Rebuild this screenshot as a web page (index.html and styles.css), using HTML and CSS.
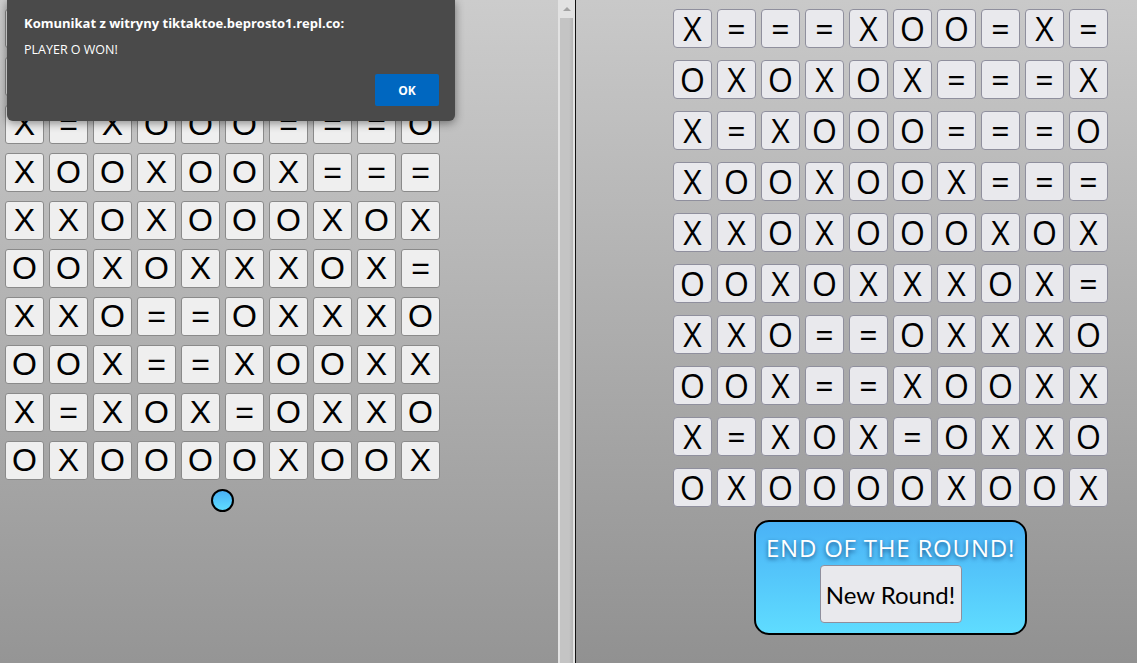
FILE: index.html
```html
<!DOCTYPE html>
<html lang="pl">
<head>
<meta charset="utf-8">
<title>Tik Tak Toe</title>
<link rel="stylesheet" href="styles.css">
</head>
<body>
<div class="pane pane-left">
  <div class="col">
    <div class="board board-l">
      <div class="row"><button class="cell">X</button><button class="cell">=</button><button class="cell">=</button><button class="cell">=</button><button class="cell">X</button><button class="cell">O</button><button class="cell">O</button><button class="cell">=</button><button class="cell">X</button><button class="cell">=</button></div>
      <div class="row"><button class="cell">O</button><button class="cell">X</button><button class="cell">O</button><button class="cell">X</button><button class="cell">O</button><button class="cell">X</button><button class="cell">=</button><button class="cell">=</button><button class="cell">=</button><button class="cell">X</button></div>
      <div class="row"><button class="cell">X</button><button class="cell">=</button><button class="cell">X</button><button class="cell">O</button><button class="cell">O</button><button class="cell">O</button><button class="cell">=</button><button class="cell">=</button><button class="cell">=</button><button class="cell">O</button></div>
      <div class="row"><button class="cell">X</button><button class="cell">O</button><button class="cell">O</button><button class="cell">X</button><button class="cell">O</button><button class="cell">O</button><button class="cell">X</button><button class="cell">=</button><button class="cell">=</button><button class="cell">=</button></div>
      <div class="row"><button class="cell">X</button><button class="cell">X</button><button class="cell">O</button><button class="cell">X</button><button class="cell">O</button><button class="cell">O</button><button class="cell">O</button><button class="cell">X</button><button class="cell">O</button><button class="cell">X</button></div>
      <div class="row"><button class="cell">O</button><button class="cell">O</button><button class="cell">X</button><button class="cell">O</button><button class="cell">X</button><button class="cell">X</button><button class="cell">X</button><button class="cell">O</button><button class="cell">X</button><button class="cell">=</button></div>
      <div class="row"><button class="cell">X</button><button class="cell">X</button><button class="cell">O</button><button class="cell">=</button><button class="cell">=</button><button class="cell">O</button><button class="cell">X</button><button class="cell">X</button><button class="cell">X</button><button class="cell">O</button></div>
      <div class="row"><button class="cell">O</button><button class="cell">O</button><button class="cell">X</button><button class="cell">=</button><button class="cell">=</button><button class="cell">X</button><button class="cell">O</button><button class="cell">O</button><button class="cell">X</button><button class="cell">X</button></div>
      <div class="row"><button class="cell">X</button><button class="cell">=</button><button class="cell">X</button><button class="cell">O</button><button class="cell">X</button><button class="cell">=</button><button class="cell">O</button><button class="cell">X</button><button class="cell">X</button><button class="cell">O</button></div>
      <div class="row"><button class="cell">O</button><button class="cell">X</button><button class="cell">O</button><button class="cell">O</button><button class="cell">O</button><button class="cell">O</button><button class="cell">X</button><button class="cell">O</button><button class="cell">O</button><button class="cell">X</button></div>
    </div>
    <div class="dot"></div>
  </div>
  <div class="dialog">
    <div class="dialog-title">Komunikat z witryny tiktaktoe.beprosto1.repl.co:</div>
    <div class="dialog-msg">PLAYER O WON!</div>
    <button class="dialog-ok">OK</button>
  </div>
</div>
<div class="scrollbar">
  <div class="scroll-arrow"></div>
  <div class="scroll-thumb"></div>
</div>
<div class="pane pane-right">
  <div class="col">
    <div class="board board-r">
      <div class="row"><button class="cell">X</button><button class="cell">=</button><button class="cell">=</button><button class="cell">=</button><button class="cell">X</button><button class="cell">O</button><button class="cell">O</button><button class="cell">=</button><button class="cell">X</button><button class="cell">=</button></div>
      <div class="row"><button class="cell">O</button><button class="cell">X</button><button class="cell">O</button><button class="cell">X</button><button class="cell">O</button><button class="cell">X</button><button class="cell">=</button><button class="cell">=</button><button class="cell">=</button><button class="cell">X</button></div>
      <div class="row"><button class="cell">X</button><button class="cell">=</button><button class="cell">X</button><button class="cell">O</button><button class="cell">O</button><button class="cell">O</button><button class="cell">=</button><button class="cell">=</button><button class="cell">=</button><button class="cell">O</button></div>
      <div class="row"><button class="cell">X</button><button class="cell">O</button><button class="cell">O</button><button class="cell">X</button><button class="cell">O</button><button class="cell">O</button><button class="cell">X</button><button class="cell">=</button><button class="cell">=</button><button class="cell">=</button></div>
      <div class="row"><button class="cell">X</button><button class="cell">X</button><button class="cell">O</button><button class="cell">X</button><button class="cell">O</button><button class="cell">O</button><button class="cell">O</button><button class="cell">X</button><button class="cell">O</button><button class="cell">X</button></div>
      <div class="row"><button class="cell">O</button><button class="cell">O</button><button class="cell">X</button><button class="cell">O</button><button class="cell">X</button><button class="cell">X</button><button class="cell">X</button><button class="cell">O</button><button class="cell">X</button><button class="cell">=</button></div>
      <div class="row"><button class="cell">X</button><button class="cell">X</button><button class="cell">O</button><button class="cell">=</button><button class="cell">=</button><button class="cell">O</button><button class="cell">X</button><button class="cell">X</button><button class="cell">X</button><button class="cell">O</button></div>
      <div class="row"><button class="cell">O</button><button class="cell">O</button><button class="cell">X</button><button class="cell">=</button><button class="cell">=</button><button class="cell">X</button><button class="cell">O</button><button class="cell">O</button><button class="cell">X</button><button class="cell">X</button></div>
      <div class="row"><button class="cell">X</button><button class="cell">=</button><button class="cell">X</button><button class="cell">O</button><button class="cell">X</button><button class="cell">=</button><button class="cell">O</button><button class="cell">X</button><button class="cell">X</button><button class="cell">O</button></div>
      <div class="row"><button class="cell">O</button><button class="cell">X</button><button class="cell">O</button><button class="cell">O</button><button class="cell">O</button><button class="cell">O</button><button class="cell">X</button><button class="cell">O</button><button class="cell">O</button><button class="cell">X</button></div>
    </div>
    <div class="round-box">
      <div class="round-title">END OF THE ROUND!</div>
      <button class="new-round">New Round!</button>
    </div>
  </div>
</div>
</body>
</html>
```
FILE: styles.css
```css
html, body {
  margin: 0;
  padding: 0;
}
body {
  width: 1137px;
  height: 663px;
  display: flex;
  overflow: hidden;
  font-family: "Open Sans", "Liberation Sans", sans-serif;
}
.pane {
  height: 663px;
  box-sizing: border-box;
  background: linear-gradient(#cccccc, #959595);
}
.pane-left {
  width: 558px;
  position: relative;
  padding: 9px 0 0 5px;
}
.pane-right {
  flex: 1;
  padding: 9px 0 0 97px;
  background: linear-gradient(#c9c9c9, #919191);
}
.col {
  width: 435px;
  display: flex;
  flex-direction: column;
  align-items: center;
}
.board {
  display: flex;
  flex-direction: column;
}
.board-l { gap: 9px; }
.board-r { gap: 12px; }
.row {
  display: flex;
  gap: 5px;
}
.cell {
  width: 39px;
  height: 39px;
  box-sizing: border-box;
  padding: 0;
  margin: 0;
  display: flex;
  align-items: center;
  justify-content: center;
  color: #000;
  line-height: 1;
}
.board-l .cell {
  background: #efefef;
  border: 1px solid #8a8a8a;
  border-radius: 3px;
  font: 32px "Liberation Sans", Arial, sans-serif;
}
.board-r .cell {
  background: #e9e9ed;
  border: 1px solid #8f8f9d;
  border-radius: 4px;
  font: 32px "Open Sans", sans-serif;
}
.dot {
  width: 23px;
  height: 23px;
  box-sizing: border-box;
  margin-top: 9px;
  border: 2px solid #000;
  border-radius: 50%;
  background: linear-gradient(#4ab2f6, #5fdcff);
}
.dialog {
  position: absolute;
  left: 7px;
  top: 0;
  width: 448px;
  height: 121px;
  box-sizing: border-box;
  padding: 13px 16px 0 17px;
  background: #4a4a4a;
  border-radius: 0 0 6px 6px;
  box-shadow: 0 2px 10px rgba(0, 0, 0, 0.45);
  display: flex;
  flex-direction: column;
  color: #fff;
}
.dialog-title {
  font: bold 13px/20px "Open Sans", sans-serif;
}
.dialog-msg {
  margin-top: 8px;
  font: 12.5px/18px "Open Sans", sans-serif;
}
.dialog-ok {
  align-self: flex-end;
  margin-top: 15px;
  width: 64px;
  height: 32px;
  border: none;
  border-radius: 2px;
  background: #0067c0;
  color: #fff;
  font: bold 12px "Open Sans", sans-serif;
  padding: 0;
}
.scrollbar {
  width: 17px;
  height: 663px;
  background: #e2e2e2;
  border-right: 1px solid #111;
  display: flex;
  flex-direction: column;
  align-items: center;
}
.scroll-arrow {
  width: 0;
  height: 0;
  margin-top: 7px;
  border-left: 4px solid transparent;
  border-right: 4px solid transparent;
  border-bottom: 4px solid #a3a3a3;
}
.scroll-thumb {
  margin-top: 7px;
  width: 13px;
  flex: 1;
  background: linear-gradient(90deg, #c4c4c4 70%, #b4b4b4);
}
.round-box {
  margin-top: 13px;
  width: 273px;
  height: 115px;
  box-sizing: border-box;
  border: 2px solid #000;
  border-radius: 15px;
  background: linear-gradient(#4ab2f6, #5fdcff);
  display: flex;
  flex-direction: column;
  align-items: center;
  padding-top: 12px;
}
.round-title {
  font: 24px/28px "Open Sans", sans-serif;
  letter-spacing: 0.8px;
  color: #fff;
  white-space: nowrap;
  text-shadow: 0 2px 4px rgba(0, 40, 90, 0.7);
}
.new-round {
  margin-top: 3px;
  width: 142px;
  height: 58px;
  box-sizing: border-box;
  background: #e9e9ed;
  border: 1px solid #8f8f9d;
  border-radius: 4px;
  color: #000;
  font: 24px Lato, sans-serif;
  padding: 0;
}
```
